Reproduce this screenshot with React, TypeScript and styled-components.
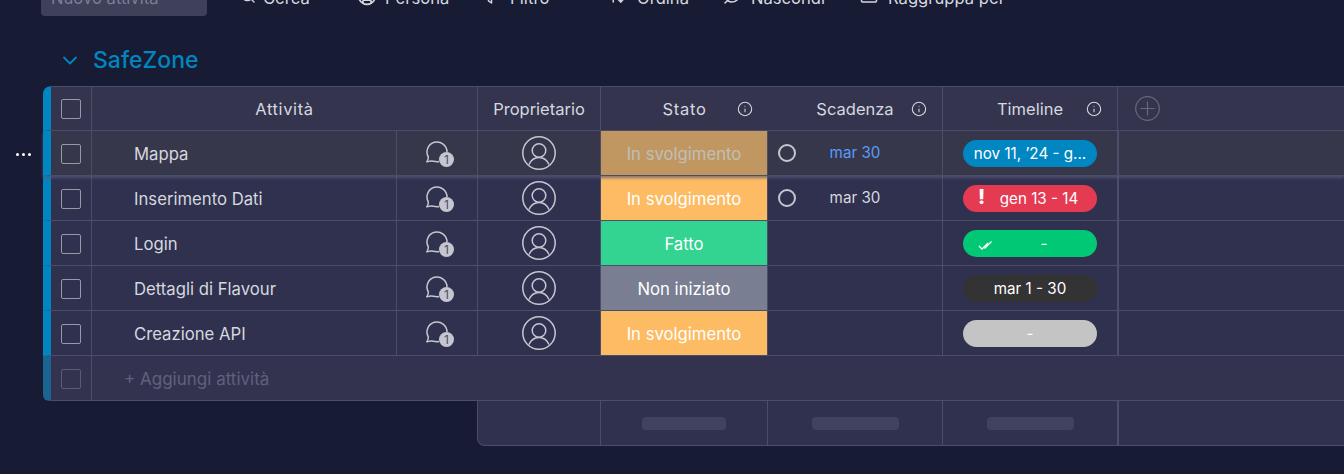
import * as React from "react";
import styled, { createGlobalStyle } from "styled-components";
import { Search, CircleUser, ArrowUpDown, Info } from "lucide-react";

const GlobalStyle = createGlobalStyle`
  html, body {
    margin: 0;
    height: 100%;
    overflow: hidden;
    background-color: #181b34;
  }
  body {
    font-family: Inter, "Open Sans", "Liberation Sans", sans-serif;
    color: #d5d8df;
  }
`;

const COLUMNS = "40px 1px 304px 1px 80px 1px 122px 1px 166px 1px 174px 1px 174px 2px 1fr";

const Page = styled.div`
  position: relative;
  height: 474px;
  overflow: hidden;
`;

const Toolbar = styled.div`
  display: flex;
  align-items: center;
  height: 32px;
  margin-top: -16px;
  padding-left: 41px;
`;

const NewTask = styled.div`
  width: 166px;
  height: 32px;
  box-sizing: border-box;
  padding: 0 10px 4px;
  margin-right: 33px;
  display: flex;
  align-items: center;
  background-color: #3f4059;
  border-radius: 4px;
  color: #7c7e95;
  font-size: 16.6px;
`;

const ToolItem = styled.div<{ $width: number; $gap: number }>`
  display: flex;
  align-items: center;
  gap: ${(p) => p.$gap}px;
  width: ${(p) => p.$width}px;
  padding-bottom: 5px;
  font-size: 16.6px;
  white-space: nowrap;
  color: #d5d8df;

  svg {
    flex: none;
    transform: translateY(-2px);
  }
`;

const GroupTitle = styled.div`
  display: flex;
  align-items: center;
  gap: 15px;
  height: 32px;
  margin-top: 28px;
  margin-bottom: 10px;
  padding-left: 62px;
  color: #0086c0;
  font-size: 23px;
  font-weight: 500;
`;

const Board = styled.div`
  margin-left: 43px;
`;

const Row = styled.div<{ $bg: string }>`
  display: grid;
  grid-template-columns: ${COLUMNS};
  height: 44px;
  background-color: ${(p) => p.$bg};
  border-left: 8px solid #0086c0;
  border-bottom: 1px solid #4b4e69;
`;

const HeaderRow = styled(Row)`
  grid-template-columns: 40px 1px 304px 1px 80px 1px 122px 1px 166px 1px 174px 1px 174px 1px 1fr;
  height: 43px;
  border-top: 1px solid #4b4e69;
  border-top-left-radius: 8px;
`;

const HoverRow = styled(Row)`
  position: relative;
  z-index: 1;
  box-shadow: 0 2px 3px rgba(88, 90, 122, 0.75);
`;

const AddRow = styled(Row)`
  border-left-color: #1a6491;
  border-bottom-left-radius: 6px;
`;

const Line = styled.div`
  background-color: #4b4e69;
`;

const Cell = styled.div<{ $span?: number }>`
  grid-column: span ${(p) => p.$span ?? 1};
  display: flex;
  align-items: center;
  justify-content: center;
  min-width: 0;
`;

const RowCheckCell = styled(Cell)`
  padding-top: 2px;
`;

const HeadCell = styled(Cell)<{ $track?: number }>`
  position: relative;
  font-size: 16.5px;
  letter-spacing: ${(p) => p.$track ?? 0}px;
  color: #d5d8df;
`;

const HeadInfo = styled.span`
  position: absolute;
  right: 15px;
  top: 14px;
  display: flex;
  color: #d5d8df;
`;

const AddColumnCell = styled(HeadCell)`
  justify-content: flex-start;
  padding-left: 17px;
`;

const HeadSplit = styled.div`
  display: grid;
  grid-template-columns: 167px 174px;
  width: 100%;
  height: 100%;
`;

const Check = styled.div<{ $dim?: boolean }>`
  width: 20px;
  height: 20px;
  box-sizing: border-box;
  border: 1px solid ${(p) => (p.$dim ? "#5a5c75" : "#9699a6")};
  border-radius: 2px;
`;

const NameCell = styled(Cell)`
  justify-content: flex-start;
  padding: 2px 0 0 42px;
  font-size: 16.7px;
  color: #d5d8df;
`;

const AddText = styled(Cell)`
  justify-content: flex-start;
  padding: 2px 0 0 32px;
  font-size: 17px;
  color: #5f617b;
`;

const StatusCell = styled(Cell)<{ $bg: string; $dim?: boolean }>`
  padding-top: 2px;
  background-color: ${(p) => p.$bg};
  color: ${(p) => (p.$dim ? "#c1bfb9" : "#ffffff")};
  font-size: 16.7px;
`;

const DateCell = styled(Cell)<{ $blue?: boolean }>`
  position: relative;
  font-size: 15.2px;
  color: ${(p) => (p.$blue ? "#579bfc" : "#d5d8df")};
  padding-bottom: 2px;
  box-sizing: border-box;
`;

const DateRing = styled.span`
  position: absolute;
  left: 10px;
  top: 13px;
  width: 18px;
  height: 18px;
  box-sizing: border-box;
  border: 2px solid #c5c7d0;
  border-radius: 50%;
`;

const Pill = styled.div<{ $bg: string }>`
  position: relative;
  width: 134px;
  height: 27px;
  display: flex;
  align-items: center;
  justify-content: center;
  border-radius: 14px;
  background-color: ${(p) => p.$bg};
  color: #ffffff;
  font-size: 15.2px;
  white-space: nowrap;
`;

const PillMark = styled.span`
  position: absolute;
  left: 15px;
  top: 0;
  bottom: 2px;
  display: flex;
  align-items: center;
  font-weight: 800;
  font-size: 20px;
`;

const PillText = styled.span<{ $shift?: number }>`
  transform: translateX(${(p) => p.$shift ?? 0}px);
`;

const DoubleCheckIcon = styled.svg`
  margin-top: 5px;
`;

const CommentWrap = styled.div`
  position: relative;
  width: 30px;
  height: 30px;
  padding: 3px 0 0 3px;
  box-sizing: border-box;
`;

const CommentBadge = styled.span`
  position: absolute;
  left: 17px;
  top: 14px;
  width: 15px;
  height: 15px;
  border-radius: 50%;
  background-color: #c5c7d0;
  color: #4b4e69;
  font-size: 12px;
  line-height: 16px;
  text-align: center;
`;

const RowMenu = styled.div`
  position: absolute;
  left: 16px;
  top: 153px;
  display: flex;
  gap: 3px;
`;

const Dot = styled.span`
  width: 3px;
  height: 3px;
  border-radius: 50%;
  background-color: #ffffff;
`;

const Footer = styled.div`
  display: grid;
  grid-template-columns: 122px 1px 166px 1px 174px 1px 174px 2px 1fr;
  height: 44px;
  margin-left: 434px;
  background-color: #30314f;
  border-left: 1px solid #4b4e69;
  border-bottom: 1px solid #4b4e69;
  border-bottom-left-radius: 8px;
`;

const FooterCell = styled.div`
  display: flex;
  align-items: center;
  justify-content: center;
`;

const SumBar = styled.div<{ $width: number }>`
  width: ${(p) => p.$width}px;
  height: 13px;
  border-radius: 4px;
  background-color: #41425e;
`;

const Comment = () => (
  <CommentWrap>
    <svg width="24" height="24" viewBox="0 0 24 24" fill="none" stroke="#c5c7d0" strokeWidth="1.5" strokeLinejoin="round">
      <path d="M1.500 21c1.200-1.300 1.900-3 1.840-5A10 10 0 1 1 22 11" />
      <path d="M14 20.500c-3 .6-5.500-.3-7.500-.5-1.800-.2-3.500.6-5 1" />
    </svg>
    <CommentBadge>1</CommentBadge>
  </CommentWrap>
);

const Owner = () => (
  <svg width="34" height="34" viewBox="0 0 34 34" fill="none" stroke="#c5c7d0" strokeWidth="1.5">
    <circle cx="17" cy="17" r="16.200" />
    <circle cx="17" cy="14.500" r="6.800" />
    <path d="M7 28.500C9 24 12.500 21.500 17 21.500s8 2.500 10 7" />
  </svg>
);

const HeadIcon = () => (
  <HeadInfo>
    <Info size={16} strokeWidth={1.6} />
  </HeadInfo>
);

const StatusHead = () => (
  <HeadSplit>
    <HeadCell $track={0.7}>Stato<HeadIcon /></HeadCell>
    <HeadCell>Scadenza<HeadIcon /></HeadCell>
  </HeadSplit>
);

const Funnel = () => (
  <svg width="18" height="18" viewBox="0 0 18 18" fill="none" stroke="currentColor" strokeWidth="1.5" strokeLinejoin="round">
    <path d="M2 3h14l-5.500 6.500v6.500l-3-2V9.500z" />
  </svg>
);

const Eye = () => (
  <svg width="20" height="18" viewBox="0 0 20 18" fill="none" stroke="currentColor" strokeWidth="1.5" strokeLinecap="round">
    <path d="M2 9c2-4 5-6 8-6s6 2 8 6c-2 4-5 6-8 6-2 0-3-.6-4.500-1.500" />
    <path d="M3 16 17 2" />
  </svg>
);

const Group = () => (
  <svg width="18" height="18" viewBox="0 0 18 18" fill="none" stroke="currentColor" strokeWidth="1.5">
    <rect x="1.500" y="3" width="15" height="12" rx="1" />
    <path d="M1.500 10h15" />
  </svg>
);

const Chevron = () => (
  <svg width="16" height="16" viewBox="0 0 16 16" fill="none" stroke="#0086c0" strokeWidth="1.8" strokeLinecap="round" strokeLinejoin="round">
    <path d="M2 5.500 8 11.500l6-6" />
  </svg>
);

const AddColumn = () => (
  <svg width="25" height="25" viewBox="0 0 25 25" fill="none" stroke="#676879" strokeWidth="1.2">
    <circle cx="12.500" cy="12.500" r="11.800" />
    <path d="M12.500 5.500v14M5.500 12.500h14" />
  </svg>
);

const DoubleCheck = () => (
  <DoubleCheckIcon width="15" height="12" viewBox="0 0 15 12" fill="none" stroke="#ffffff" strokeWidth="1.3">
    <path d="m1 7 3 3 6-6M6.500 9.500l7-7" />
  </DoubleCheckIcon>
);

type Task = {
  name: string;
  status: string;
  statusBg: string;
  date?: string;
  pill: string;
  pillBg: string;
  mark?: React.ReactNode;
  shift?: number;
};

const TASKS: Task[] = [
  { name: "Mappa", status: "In svolgimento", statusBg: "#c09760", date: "mar 30", pill: "nov 11, ’24 - g...", pillBg: "#0086c0" },
  { name: "Inserimento Dati", status: "In svolgimento", statusBg: "#fdbc64", date: "mar 30", pill: "gen 13 - 14", pillBg: "#e43a52", mark: "!", shift: 9 },
  { name: "Login", status: "Fatto", statusBg: "#33d391", pill: "-", pillBg: "#00c875", mark: <DoubleCheck />, shift: 14 },
  { name: "Dettagli di Flavour", status: "Non iniziato", statusBg: "#797e93", pill: "mar 1 - 30", pillBg: "#333333" },
  { name: "Creazione API", status: "In svolgimento", statusBg: "#fdbc64", pill: "-", pillBg: "#c4c4c4" },
];

const TaskCells = ({ task, hover }: { task: Task; hover: boolean }) => (
  <>
    <RowCheckCell><Check /></RowCheckCell>
    <Line />
    <NameCell>{task.name}</NameCell>
    <Line />
    <Cell><Comment /></Cell>
    <Line />
    <Cell><Owner /></Cell>
    <Line />
    <StatusCell $bg={task.statusBg} $dim={hover}>{task.status}</StatusCell>
    <Line />
    <DateCell $blue={hover}>
      {task.date && <DateRing />}
      {task.date}
    </DateCell>
    <Line />
    <Cell>
      <Pill $bg={task.pillBg}>
        {task.mark && <PillMark>{task.mark}</PillMark>}
        <PillText $shift={task.shift}>{task.pill}</PillText>
      </Pill>
    </Cell>
    <Line />
    <Cell />
  </>
);

export default function App() {
  return (
    <Page>
      <GlobalStyle />
      <Toolbar>
        <NewTask>Nuovo attività</NewTask>
        <ToolItem $width={117} $gap={7}><Search size={16} />Cerca</ToolItem>
        <ToolItem $width={124} $gap={8}><CircleUser size={20} />Persona</ToolItem>
        <ToolItem $width={127} $gap={11}><Funnel />Filtro</ToolItem>
        <ToolItem $width={114} $gap={11}><ArrowUpDown size={18} />Ordina</ToolItem>
        <ToolItem $width={138} $gap={9}><Eye />Nascondi</ToolItem>
        <ToolItem $width={160} $gap={10}><Group />Raggruppa per</ToolItem>
      </Toolbar>
      <GroupTitle>
        <Chevron />
        SafeZone
      </GroupTitle>
      <Board>
        <HeaderRow $bg="#34344f">
          <Cell><Check /></Cell>
          <Line />
          <HeadCell $span={3} $track={0.6}>Attività</HeadCell>
          <Line />
          <HeadCell>Proprietario</HeadCell>
          <Line />
          <HeadCell $span={3}>
            <StatusHead />
          </HeadCell>
          <Line />
          <HeadCell>
            Timeline
            <HeadIcon />
          </HeadCell>
          <Line />
          <AddColumnCell>
            <AddColumn />
          </AddColumnCell>
        </HeaderRow>
        {TASKS.map((task, i) =>
          i === 0 ? (
            <HoverRow key={task.name} $bg="#36374a">
              <TaskCells task={task} hover />
            </HoverRow>
          ) : (
            <Row key={task.name} $bg="#30314f">
              <TaskCells task={task} hover={false} />
            </Row>
          )
        )}
        <AddRow $bg="#33334f">
          <RowCheckCell><Check $dim /></RowCheckCell>
          <Line />
          <AddText $span={13}>+ Aggiungi attività</AddText>
        </AddRow>
        <Footer>
          <FooterCell />
          <Line />
          <FooterCell><SumBar $width={84} /></FooterCell>
          <Line />
          <FooterCell><SumBar $width={87} /></FooterCell>
          <Line />
          <FooterCell><SumBar $width={87} /></FooterCell>
          <Line />
          <FooterCell />
        </Footer>
      </Board>
      <RowMenu><Dot /><Dot /><Dot /></RowMenu>
    </Page>
  );
}
